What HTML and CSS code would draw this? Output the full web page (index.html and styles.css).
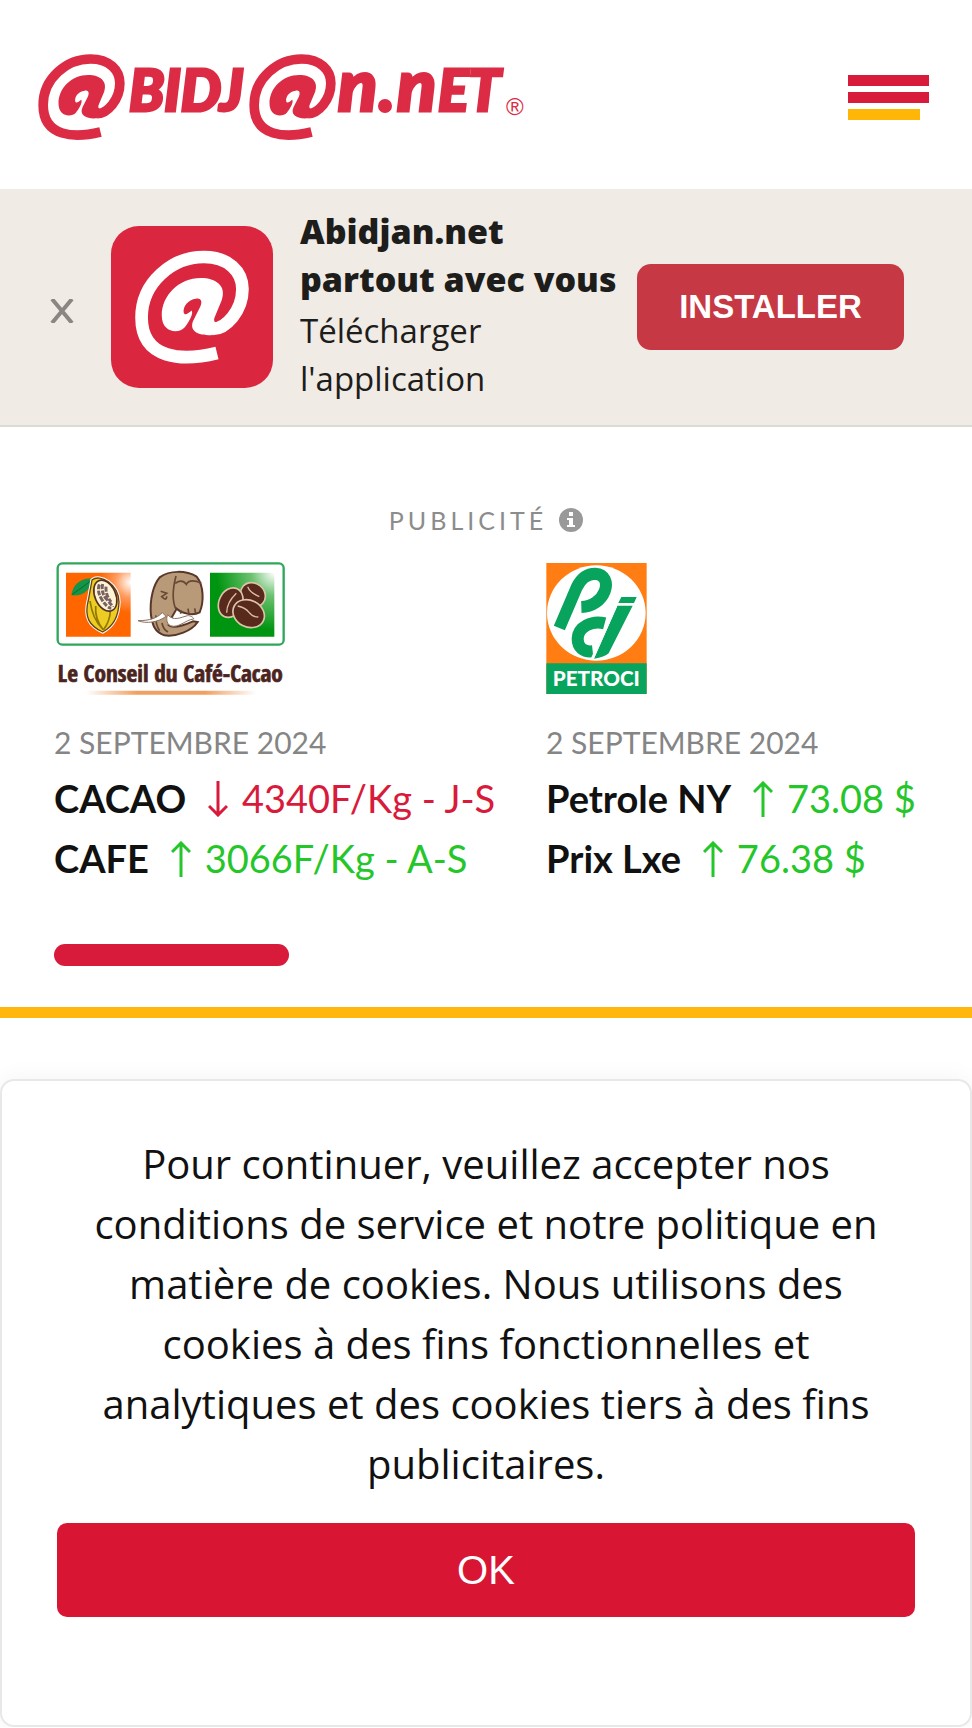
FILE: index.html
```
<!DOCTYPE html>
<html lang="fr">
<head>
<meta charset="utf-8">
<meta name="viewport" content="width=device-width, initial-scale=1">
<title>Abidjan.net</title>
<link rel="stylesheet" href="styles.css">
</head>
<body>
<svg class="defs" width="0" height="0" aria-hidden="true">
  <symbol id="swirl" viewBox="55 72 260 258">
    <path d="M242 306C165 325 70 322 70 225C70 145 140 87 212 87C268 87 300 120 300 160C300 210 262 251 232 251" fill="none" stroke="currentColor" stroke-width="29"/>
    <path d="M232 265C196 268 178 254 188 232L204 200C210 186 204 180 194 182C176 184 164 200 166 213C168 222 176 216 184 209C190 216 176 238 168 248C156 262 116 262 116 220C116 175 155 135 205 135C240 135 264 153 253 185L236 226C234 233 237 237 242 236Z" fill="currentColor"/>
  </symbol>
</svg>

<header class="header">
  <a class="brand" href="#" aria-label="Abidjan.net">
    <svg class="brand-logo" viewBox="38 54 487 87" aria-hidden="true">
      <use href="#swirl" x="38" y="54" width="87" height="86"/>
      <text class="wordmark" x="129" y="111">BIDJ</text>
      <use href="#swirl" x="249" y="54" width="87" height="86"/>
      <text class="wordmark tall" x="338" y="111">n</text>
      <circle cx="385" cy="106" r="7" fill="currentColor"/>
      <text class="wordmark tall" x="397" y="111">n</text>
      <text class="wordmark" x="438" y="111">ET</text>
      <text class="registered" x="506" y="115">®</text>
    </svg>
  </a>
  <button class="menu" type="button" aria-label="Menu"><span></span><span></span><span></span></button>
</header>

<section class="app-banner">
  <button class="close" type="button" aria-label="Fermer">
    <svg viewBox="0 0 24 24" aria-hidden="true"><path d="M2 0L22 24M22 0L2 24"/></svg>
  </button>
  <div class="app-icon"><svg aria-hidden="true"><use href="#swirl"/></svg></div>
  <div class="app-text">
    <strong>Abidjan.net<br>partout avec vous</strong>
    <span>Télécharger l'application</span>
  </div>
  <a class="install" href="#">INSTALLER</a>
</section>

<main class="market">
  <p class="ad-label">PUBLICITÉ
    <svg viewBox="0 0 24 24" aria-hidden="true"><circle cx="12" cy="12" r="12" fill="#999"/><path d="M10 4h4v4h-4zM8 10h6v7h2v2H8v-2h2v-5H8z" fill="#fff"/></svg>
  </p>
  <div class="quotes">
    <article class="quote">
      <svg class="sponsor" width="230" height="134" viewBox="50 38 690 402" role="img" aria-label="Le Conseil du Café-Cacao">
        <defs>
          <radialGradient id="orange" cx="1" cy=".15" r=".8"><stop offset="0" stop-color="#fff"/><stop offset=".3" stop-color="#ff9a5c"/><stop offset=".6" stop-color="#f60"/></radialGradient>
          <radialGradient id="green" cx="1" cy="0" r=".9"><stop offset="0" stop-color="#fff"/><stop offset=".4" stop-color="#6cc270"/><stop offset="1" stop-color="#009510"/></radialGradient>
          <linearGradient id="rule"><stop offset="0" stop-color="#fff"/><stop offset=".3" stop-color="#f0a060"/><stop offset=".7" stop-color="#f0a060"/><stop offset="1" stop-color="#fff"/></linearGradient>
        </defs>
        <rect x="55" y="42" width="678" height="244" rx="14" fill="#fff" stroke="#2fa75a" stroke-width="7"/>
        <path d="M80 70H274V262H80Z" fill="url(#orange)"/>
        <path d="M512 70H705V262H512Z" fill="url(#green)"/>
        <path d="M96 138C100 105 125 84 160 88C154 118 135 142 96 138Z" fill="#159447"/>
        <path d="M98 136L164 88" stroke="#0b6a30" stroke-width="3"/>
        <path d="M158 92C182 72 238 105 239 158C238 202 220 232 190 248C152 230 132 206 148 148Z" fill="#e9c92b" stroke="#fff" stroke-width="10"/>
        <path d="M158 92C182 72 238 105 239 158C238 202 220 232 190 248C152 230 132 206 148 148Z" fill="#edcc23" stroke="#674018" stroke-width="4"/>
        <path d="M152 155Q160 210 189 238M169 170Q166 210 192 242M213 184Q212 215 192 242" fill="none" stroke="#927700" stroke-width="5"/>
        <ellipse cx="198" cy="139" rx="31" ry="49" transform="rotate(-24 198 139)" fill="#fff4d6" stroke="#533126" stroke-width="5"/>
        <path d="M180 105Q172 125 187 150T216 177M190 104Q184 130 202 150T220 173M200 112Q198 136 215 158" fill="none" stroke="#796264" stroke-width="9" stroke-dasharray="15 4"/>
        <path d="M335 198C330 150 343 105 361 84C390 62 441 63 472 82C494 110 494 158 481 189C459 201 426 191 412 178C401 200 386 217 388 228C403 240 443 224 461 216L475 218C458 244 410 264 375 258C342 247 339 220 335 198Z" fill="#b99a78" stroke="#59372a" stroke-width="6"/>
        <path d="M410 80Q393 145 410 180M408 102Q428 88 441 105Q450 86 486 101M364 126L382 132L367 142Q382 157 382 141M424 182V193M446 178L449 196M466 177L469 193M350 198Q348 226 361 244M368 221Q371 240 386 248" fill="none" stroke="#674834" stroke-width="5"/>
        <path d="M296 214C331 214 352 207 369 190L380 201C357 219 320 224 296 214ZM385 196C402 217 424 204 445 199C453 198 464 205 463 209C439 211 417 238 393 229C380 222 381 204 385 196Z" fill="#fff" stroke="#8b705d" stroke-width="3"/>
        <g fill="#572a1c" stroke="#dfc4ac" stroke-width="5">
          <ellipse cx="641" cy="136" rx="34" ry="39" transform="rotate(-50 641 136)"/>
          <ellipse cx="574" cy="160" rx="35" ry="46" transform="rotate(25 574 160)"/>
          <ellipse cx="628" cy="193" rx="40" ry="49" transform="rotate(-63 628 193)"/>
        </g>
        <path d="M562 190Q562 160 591 132M595 170Q618 175 629 189T657 203M625 112Q632 130 660 142" fill="none" stroke="#e0bda7" stroke-width="4"/>
        <text class="cocoa-name" x="393" y="398">Le Conseil du Café-Cacao</text>
        <rect x="140" y="424" width="510" height="12" rx="6" fill="url(#rule)"/>
      </svg>
      <time datetime="2024-09-02">2 SEPTEMBRE 2024</time>
      <p class="rate"><strong>CACAO</strong> <span class="down"><svg viewBox="0 0 20 36" aria-hidden="true"><path d="M10 0V34M1 25L10 34L19 25"/></svg>4340F/Kg - J-S</span></p>
      <p class="rate"><strong>CAFE</strong> <span class="up"><svg viewBox="0 0 20 36" aria-hidden="true"><path d="M10 36V2M1 11L10 2L19 11"/></svg>3066F/Kg - A-S</span></p>
    </article>
    <article class="quote">
      <svg class="sponsor" width="101" height="134" viewBox="46 38 303 402" role="img" aria-label="PETROCI">
        <path d="M47 41H348V434H47Z" fill="#ff7d13"/>
        <ellipse cx="197" cy="191" rx="148" ry="143" fill="#fff"/>
        <path d="M47 342H348V434H47Z" fill="#08a45e"/>
        <g fill="none" stroke="#08a45e" stroke-width="36">
          <path d="M86 236L138 114C153 82 172 73 194 73C222 74 232 100 222 126C211 154 184 172 152 173"/>
          <path d="M222 222C185 212 142 232 141 268C141 294 158 309 186 306"/>
        </g>
        <path d="M272 143H318L310 161H263ZM260 169H306L234 312Q222 324 190 328Z" fill="#08a45e"/>
        <path d="M256 169L184 330" stroke="#fff" stroke-width="8"/>
        <text class="petroci-name" x="197" y="411">PETROCI</text>
      </svg>
      <time datetime="2024-09-02">2 SEPTEMBRE 2024</time>
      <p class="rate"><strong>Petrole NY</strong> <span class="up"><svg viewBox="0 0 20 36" aria-hidden="true"><path d="M10 36V2M1 11L10 2L19 11"/></svg>73.08 $</span></p>
      <p class="rate"><strong>Prix Lxe</strong> <span class="up"><svg viewBox="0 0 20 36" aria-hidden="true"><path d="M10 36V2M1 11L10 2L19 11"/></svg>76.38 $</span></p>
    </article>
  </div>
  <div class="scroll-thumb"></div>
</main>

<section class="cookies" aria-label="Cookies">
  <p>Pour continuer, veuillez accepter nos conditions de service et notre politique en matière de cookies. Nous utilisons des cookies à des fins fonctionnelles et analytiques et des cookies tiers à des fins publicitaires.</p>
  <button type="button">OK</button>
</section>
</body>
</html>
```
FILE: styles.css
```
* { box-sizing: border-box; }

body {
  margin: 0;
  background: #fff;
  color: #111;
  font-family: Lato, "Open Sans", sans-serif;
}

p { margin: 0; }

button {
  margin: 0;
  padding: 0;
  border: 0;
  background: none;
  font: inherit;
  cursor: pointer;
}

.defs { position: absolute; }

.header {
  display: flex;
  align-items: center;
  justify-content: space-between;
  height: 189px;
  padding: 5px 43px 0 38px;
}

.brand { color: #dc2b44; }

.brand-logo {
  display: block;
  width: 487px;
  height: 87px;
  overflow: visible;
}

.wordmark {
  fill: #dc2b44;
  stroke: #dc2b44;
  stroke-width: 3;
  font: italic 900 57px Lato, sans-serif;
}

.tall { font-size: 72px; }

.registered {
  fill: #dc2b44;
  font: 24px "Liberation Sans", sans-serif;
}

.menu {
  display: flex;
  flex-direction: column;
  gap: 6px;
  width: 81px;
}

.menu span {
  height: 11px;
  background: #d81b3a;
}

.menu span:last-child {
  width: 72px;
  background: #ffb606;
}

.app-banner {
  display: flex;
  align-items: center;
  height: 238px;
  padding: 0 68px 0 50px;
  background: #f1ebe6;
  border-bottom: 2px solid #dbdcd6;
}

.close {
  width: 24px;
  height: 24px;
  margin: 8px 37px 0 0;
}

.close svg {
  display: block;
  fill: none;
  stroke: #8b8583;
  stroke-width: 4;
}

.app-icon {
  flex: none;
  width: 162px;
  padding: 24px;
  border-radius: 28px;
  background: #da263f;
  color: #fff;
}

.app-icon svg {
  display: block;
  width: 114px;
  height: 114px;
}

.app-text {
  flex: 1;
  padding: 0 0 4px 27px;
  color: #1d1d1b;
  font: 400 33px/48px "Open Sans", sans-serif;
}

.app-text strong {
  display: block;
  margin-bottom: 4px;
  font-weight: 800;
  font-size: 34px;
}

.app-text span {
  display: block;
  width: 240px;
}

.install {
  flex: none;
  width: 267px;
  border-radius: 14px;
  background: #c63844;
  color: #fff;
  font: bold 33px/86px "Liberation Sans", sans-serif;
  text-align: center;
  text-decoration: none;
}

.market {
  padding: 76px 0 41px 54px;
  border-bottom: 11px solid #ffb60d;
}

.ad-label {
  display: flex;
  align-items: center;
  justify-content: center;
  gap: 12px;
  margin: 0 54px 25px 0;
  color: #8c8c8c;
  font-size: 25px;
  line-height: 34px;
  letter-spacing: 4px;
}

.ad-label svg { width: 24px; }

.quotes {
  display: grid;
  grid-template-columns: 492px 1fr;
}

.sponsor {
  display: block;
  margin-bottom: 24px;
}

.quote:first-child .sponsor { margin-left: 2px; }

.cocoa-name {
  fill: #4b2420;
  stroke: #4b2420;
  stroke-width: 2;
  font: bold 70px "Open Sans Condensed", "DejaVu Sans Condensed", sans-serif;
  text-anchor: middle;
}

.petroci-name {
  fill: #fff;
  font: 900 62px Lato, sans-serif;
  text-anchor: middle;
}

.quote time {
  display: block;
  margin-bottom: 4px;
  color: #858585;
  font-size: 30px;
  line-height: 44px;
}

.rate {
  font-size: 38px;
  line-height: 60px;
  white-space: nowrap;
}

.rate strong { margin-right: 12px; }

.rate svg {
  width: 20px;
  height: 36px;
  margin-right: 14px;
  vertical-align: -4px;
  fill: none;
  stroke: currentColor;
  stroke-width: 3;
}

.up { color: #25c62a; }

.down { color: #d81b3a; }

.scroll-thumb {
  width: 235px;
  height: 22px;
  margin-top: 56px;
  border-radius: 11px;
  background: #d81b3a;
}

.cookies {
  margin: 61px 0 0;
  padding: 53px 55px 108px;
  border: 2px solid #e8e8e8;
  border-radius: 14px;
  box-shadow: 0 0 24px #0000000d;
  font: 400 40px/60px "Open Sans", sans-serif;
  text-align: center;
}

.cookies p { padding: 0 24px; }

.cookies button {
  display: block;
  width: 100%;
  height: 94px;
  margin-top: 29px;
  border-radius: 10px;
  background: #d81633;
  color: #fff;
  font: 40px "Liberation Sans", sans-serif;
}
```
